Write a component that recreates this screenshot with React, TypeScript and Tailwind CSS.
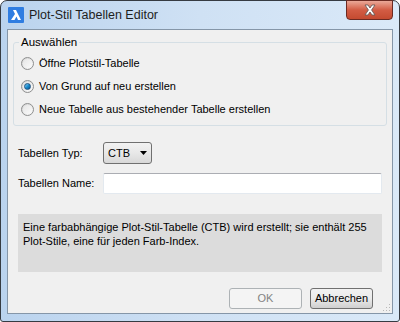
import React from "react";

const font = "font-['Segoe_UI','Liberation_Sans',sans-serif]";

function Radio({ checked, label }: { checked?: boolean; label: string }) {
  return (
    <div className="flex items-center h-[23px]">
      <span className="relative w-[13px] h-[13px] rounded-full border border-[#8e8f8f] bg-gradient-to-br from-[#d4d4d4] to-[#fbfbfb] flex items-center justify-center">
        <span className="w-[9px] h-[9px] rounded-full bg-gradient-to-br from-[#e6e6e6] to-[#fafafa] flex items-center justify-center">
          {checked && <span className="w-[7px] h-[7px] rounded-full bg-gradient-to-br from-[#7ccdf4] via-[#1a8fd0] to-[#0b4f88] border border-[#1d5281]" />}
        </span>
      </span>
      <span className="ml-[5px]">{label}</span>
    </div>
  );
}

export default function App() {
  return (
    <div className={`w-[400px] h-[322px] ${font} text-[11px] text-black`}>
      <div className="w-full h-full rounded-t-[7px] rounded-b-[3px] border border-[#363b42] bg-gradient-to-r from-[#bad3ee] via-[#cfe1f4] to-[#dae9f8] flex flex-col">
        {/* title bar */}
        <div className="h-[28px] flex items-start relative">
          <div className="mt-[6px] ml-[7px] w-[16px] h-[16px] bg-[#2f7de1] rounded-[1px] flex items-center justify-center">
            <svg width="12" height="12" viewBox="0 0 12 12">
              <path d="M1 11 L5 5 L3 1 L6 1 L11 11 L8 11 L6.5 7.5 L4.5 11 Z" fill="#fff" />
            </svg>
          </div>
          <span className="ml-[5px] mt-[7px] text-[12.5px] text-[#1e1e1e] leading-[14px]">Plot-Stil Tabellen Editor</span>
          <div className="absolute right-[6px] top-[-1px] w-[47px] h-[20px] rounded-b-[4px] border border-[#6b2a22] bg-gradient-to-b from-[#eaa898] via-[#d25c44] to-[#c44a30] flex items-center justify-center">
            <svg width="14" height="12" viewBox="0 0 14 12">
              <path d="M2 1 L5 1 L7 4 L9 1 L12 1 L8.6 6 L12 11 L9 11 L7 8 L5 11 L2 11 L5.4 6 Z" fill="#fff" stroke="#6a5b58" strokeWidth="0.9" strokeLinejoin="round" />
            </svg>
          </div>
        </div>
        {/* client */}
        <div className="flex-1 mx-[6px] mb-[7px] border border-[#8596a8] bg-[#f0f0f0] flex flex-col relative">
          <fieldset className="mx-[5px] mt-[5px] border border-[#d5dfe5] rounded-[3px] px-[7px] pb-[4px] pt-[3px]">
            <legend className="px-[2px] ml-[-2px] leading-[14px] text-[11.5px]">Auswählen</legend>
            <Radio label="Öffne Plotstil-Tabelle" />
            <Radio checked label="Von Grund auf neu erstellen" />
            <Radio label="Neue Tabelle aus bestehender Tabelle erstellen" />
          </fieldset>
          <div className="flex items-center mt-[16px] ml-[10px]">
            <span className="w-[85px]">Tabellen Typ:</span>
            <div className="w-[49px] h-[22px] rounded-[3px] border border-[#707070] bg-gradient-to-b from-[#f2f2f2] via-[#e8e8e8] to-[#d8d8d8] flex items-center px-[4px] justify-between">
              <span>CTB</span>
              <svg width="7" height="4" viewBox="0 0 7 4"><path d="M0 0 L7 0 L3.5 4 Z" fill="#000" /></svg>
            </div>
          </div>
          <div className="flex items-center mt-[9px] ml-[10px]">
            <span className="w-[85px]">Tabellen Name:</span>
            <div className="w-[279px] h-[21px] bg-white border border-[#e3e9ef] border-t-[#abadb3] rounded-[2px]" />
          </div>
          <div className="mt-[20px] mx-[10px] h-[58px] bg-[#dcdcdc] px-[5px] pt-[6px] leading-[14px]">
            Eine farbabhängige Plot-Stil-Tabelle (CTB) wird erstellt; sie enthält 255 Plot-Stile, eine für jeden Farb-Index.
          </div>
          <div className="flex justify-end mt-[16px] mr-[19px] gap-[8px]">
            <div className="w-[73px] h-[21px] rounded-[3px] border border-[#adb2b5] bg-[#f4f4f4] text-[#838383] flex items-center justify-center">OK</div>
            <div className="w-[63px] h-[21px] rounded-[3px] border border-[#707070] bg-gradient-to-b from-[#f2f2f2] via-[#ebebeb] to-[#cfcfcf] flex items-center justify-center">Abbrechen</div>
          </div>
          <svg className="absolute right-[1px] bottom-[1px]" width="10" height="10" viewBox="0 0 10 10">
            {[[8, 2], [5, 5], [8, 5], [2, 8], [5, 8], [8, 8]].map(([x, y], i) => (
              <rect key={i} x={x} y={y} width="1" height="1" fill="#b8b8b8" />
            ))}
          </svg>
        </div>
      </div>
    </div>
  );
}
